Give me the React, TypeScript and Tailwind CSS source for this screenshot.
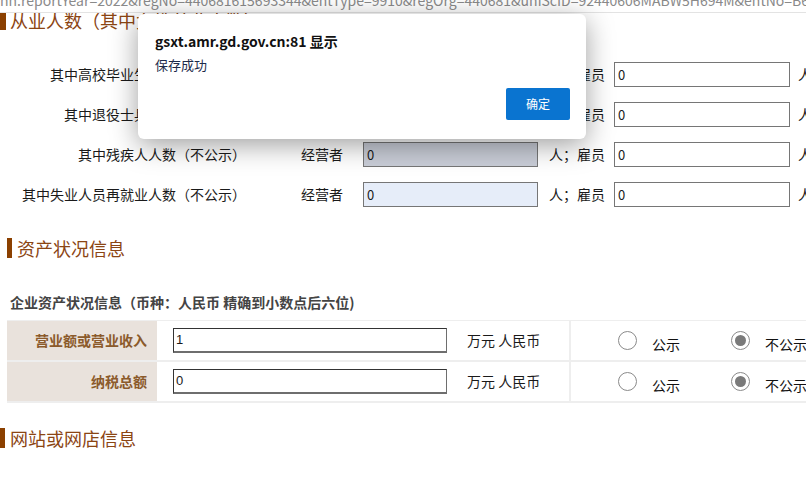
import React from "react";

const font = { fontFamily: '"Noto Sans CJK SC", "Noto Sans", sans-serif' };

const staffRows = [
  { label: "其中高校毕业生人数（不公示）", owner: "0", ownerBg: "bg-white", staff: "0" },
  { label: "其中退役士兵人数（不公示）", owner: "0", ownerBg: "bg-white", staff: "0" },
  { label: "其中残疾人人数（不公示）", owner: "0", ownerBg: "bg-[#c9cdd7]", staff: "0" },
  { label: "其中失业人员再就业人数（不公示）", owner: "0", ownerBg: "bg-[#e6edf9]", staff: "0" },
];

const assetRows = [
  { label: "营业额或营业收入", value: "1" },
  { label: "纳税总额", value: "0" },
];

function SectionTitle({ text, className }: { text: string; className?: string }) {
  return (
    <div className={"flex items-center " + (className ?? "")}>
      <span className="h-[20px] w-[5px] bg-[#8b4000]" />
      <span className="ml-[5px] text-[18px] leading-[20px] text-[#8b4513]">{text}</span>
    </div>
  );
}

function Radio({ checked, label }: { checked?: boolean; label: string }) {
  return (
    <div className="flex items-center">
      <span className="flex h-[19px] w-[19px] items-center justify-center rounded-full border border-[#8a8a8a] bg-white">
        {checked && <span className="h-[11px] w-[11px] rounded-full bg-[#7a7a7a]" />}
      </span>
      <span className="ml-[15px] mt-[8px] text-[14px] text-[#111]">{label}</span>
    </div>
  );
}

export default function App() {
  return (
    <div className="relative h-[478px] w-[806px] overflow-hidden bg-white text-[14px] text-[#1a1a1a]" style={font}>
      {/* address text, scrolled mostly out of view */}
      <div className="h-[13px] overflow-hidden border-b border-[#e3e3e3]">
        <div className="mt-[-9px] whitespace-nowrap text-[14px] leading-[18px] text-[#8a8a8a]">
          nh.reportYear=2022&amp;regNo=440681615693344&amp;entType=9910&amp;regOrg=440681&amp;uniScID=92440606MABW5H694M&amp;entNo=B6a
        </div>
      </div>

      <div className="h-[18px] overflow-hidden">
        <div className="mt-[-3px] flex items-center">
          <span className="h-[20px] w-[6px] bg-[#8b4000]" />
          <span className="ml-[4px] text-[18px] leading-[20px] text-[#8b4513]">从业人数（其中女性从业人数）</span>
        </div>
      </div>

      <div className="mt-[23px] flex flex-col">
        {staffRows.map((r) => (
          <div key={r.label} className="flex h-[40px] items-center whitespace-nowrap">
            <span className="w-[246px] shrink-0 text-right">{r.label}</span>
            <span className="ml-[55px] w-[62px] shrink-0">经营者</span>
            <div className={"h-[25px] w-[175px] shrink-0 border border-[#767676] px-[3px] text-[13px] leading-[23px] " + r.ownerBg}>{r.owner}</div>
            <span className="ml-[11px] w-[56px] shrink-0">人；雇员</span>
            <div className="ml-[9px] h-[25px] w-[176px] shrink-0 border border-[#767676] bg-white px-[3px] text-[13px] leading-[23px]">{r.staff}</div>
            <span className="ml-[8px]">人</span>
          </div>
        ))}
      </div>

      <SectionTitle text="资产状况信息" className="ml-[7px] mt-[24px]" />

      <div className="ml-[10px] mt-[34px] text-[14px] font-bold text-[#444]">企业资产状况信息（币种：人民币 精确到小数点后六位)</div>

      <div className="ml-[7px] mt-[7px] flex flex-col border-t border-[#eeeeee]">
        {assetRows.map((r) => (
          <div key={r.label} className="flex h-[41px] border-b-2 border-[#eeeeee]">
            <div className="flex w-[150px] shrink-0 items-center justify-end bg-[#e9e2dc] pr-[10px] font-bold text-[#8b5a2b]">{r.label}</div>
            <div className="flex w-[414px] shrink-0 items-center border-r-2 border-[#eeeeee] pl-[16px]">
              <div className="h-[25px] w-[274px] border border-b-2 border-[#333] border-b-[#6e6e6e] border-r-[#6e6e6e] bg-white px-[2px] text-[13px] leading-[22px]" style={{ fontFamily: '"Liberation Sans", Arial, sans-serif' }}>
                {r.value}
              </div>
              <span className="ml-[20px] whitespace-nowrap">万元 人民币</span>
            </div>
            <div className="flex items-center gap-[51px] whitespace-nowrap pl-[47px]">
              <Radio label="公示" />
              <Radio checked label="不公示" />
            </div>
          </div>
        ))}
      </div>

      <SectionTitle text="网站或网店信息" className="mt-[25px]" />

      {/* browser alert dialog */}
      <div className="absolute left-[138px] top-[14px] h-[125px] w-[448px] rounded-[6px] bg-white shadow-[0_6px_28px_rgba(0,0,0,0.38)]">
        <div className="ml-[17px] mt-[17px] text-[14px] font-bold text-[#111]">gsxt.amr.gd.gov.cn:81 显示</div>
        <div className="ml-[17px] mt-[3px] text-[13px] text-[#1d2a4a]">保存成功</div>
        <div className="flex justify-end pr-[16px] pt-[13px]">
          <button className="h-[32px] w-[64px] rounded-[2px] bg-[#0a74d0] text-[12px] text-white">确定</button>
        </div>
      </div>
    </div>
  );
}
